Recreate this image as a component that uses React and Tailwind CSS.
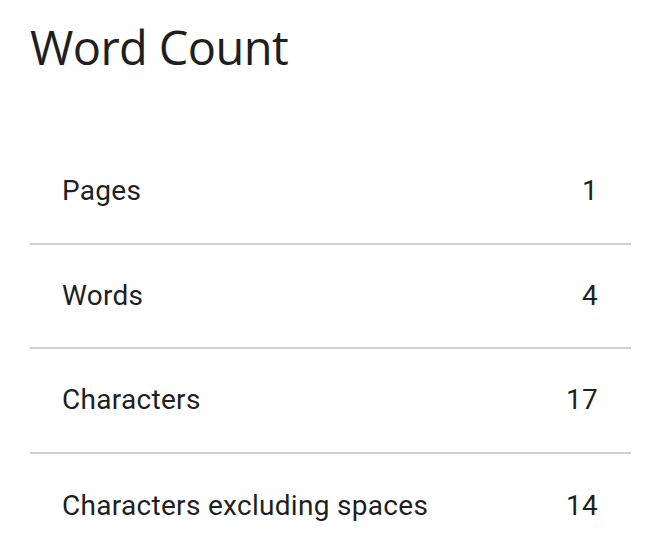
const rows = [
  { label: "Pages", value: "1" },
  { label: "Words", value: "4" },
  { label: "Characters", value: "17" },
  { label: "Characters excluding spaces", value: "14" },
];

export default function App() {
  return (
    <div className="w-[650px] h-[556px] overflow-hidden bg-white text-[#1f1f1f] font-['Roboto','Liberation_Sans',sans-serif]">
      {/* Title */}
      <h1 className="pl-[30px] pt-[21px] h-[140px] text-[47px] leading-[52px] tracking-[-0.6px] font-['Open_Sans','Roboto',sans-serif] font-normal">
        Word Count
      </h1>

      {/* Stats list */}
      <div className="ml-[30px] w-[601px]">
        {rows.map((row, i) => (
          <div
            key={row.label}
            className={
              i < rows.length - 1
                ? "h-[104.5px] flex items-center justify-between pl-[32px] pr-[33px] border-b-2 border-[#d0d0d0] text-[28px] tracking-[0.3px]"
                : "h-[104.5px] flex items-center justify-between pl-[32px] pr-[33px] text-[28px] tracking-[0.3px]"
            }
          >
            <span>{row.label}</span>
            <span>{row.value}</span>
          </div>
        ))}
      </div>
    </div>
  );
}
